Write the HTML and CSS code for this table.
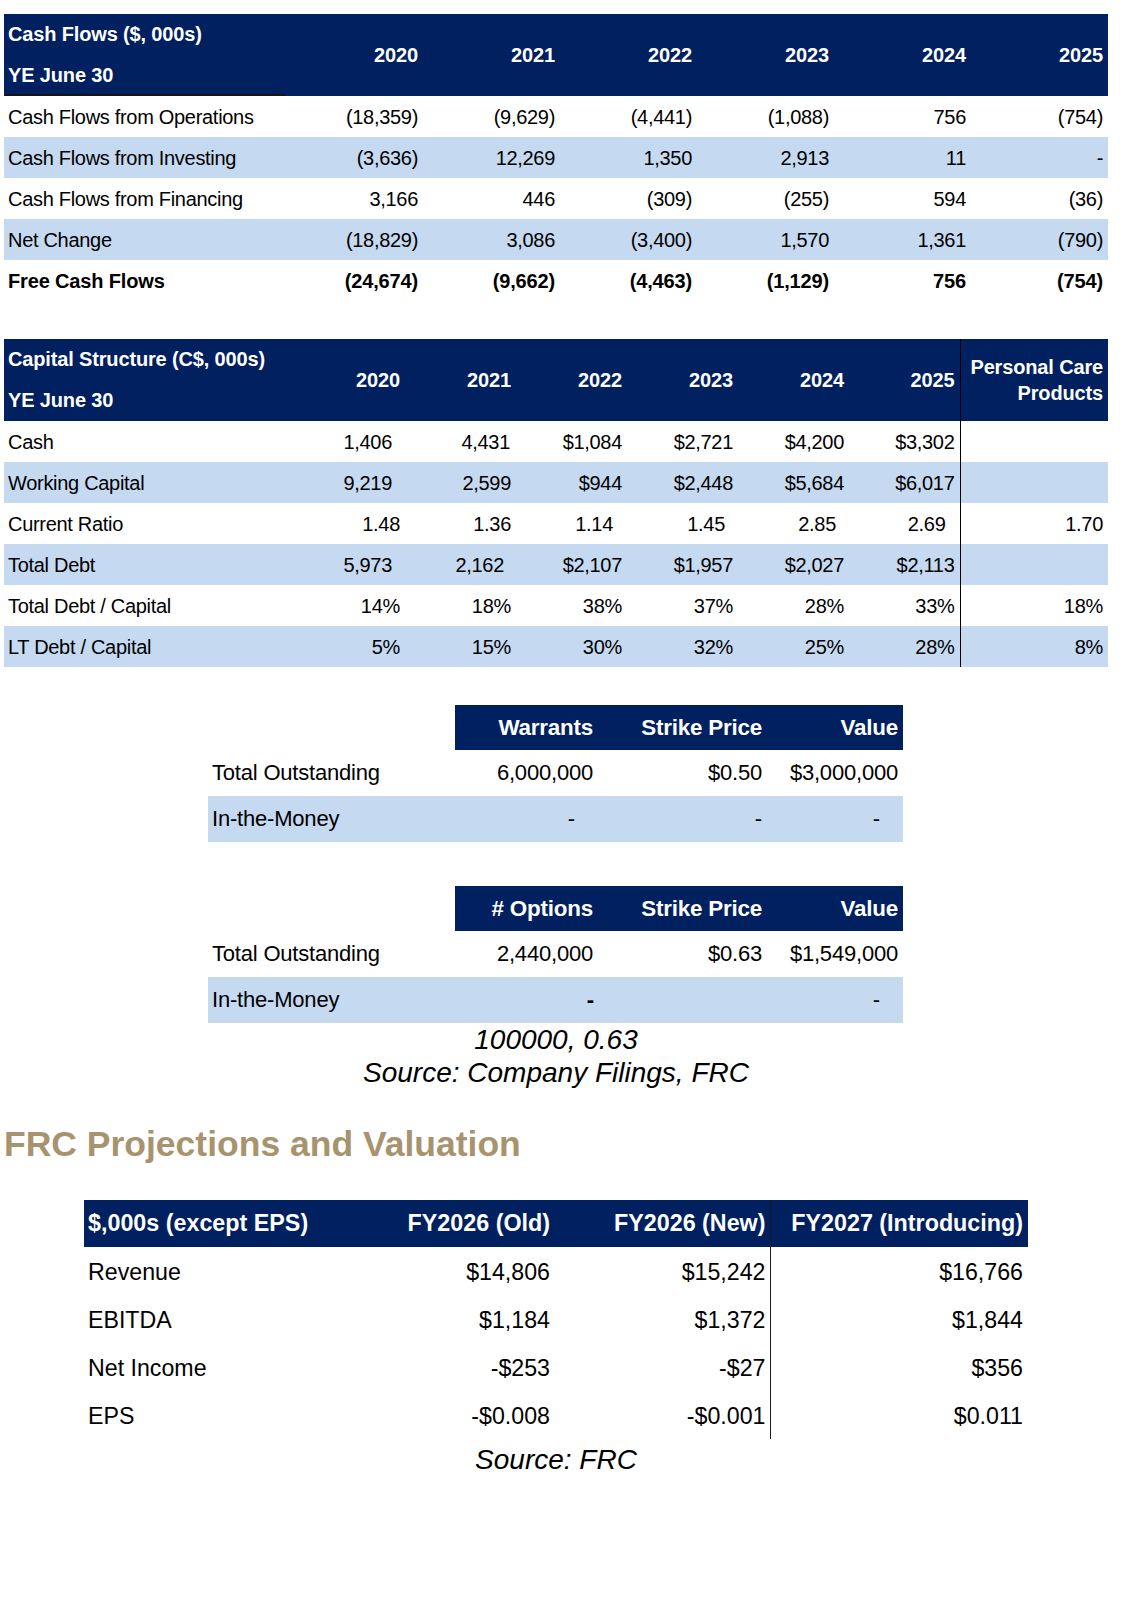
FILE: index.html
```html
<!DOCTYPE html>
<html lang="en">
<head>
<meta charset="utf-8">
<title>Financials</title>
<link rel="stylesheet" href="styles.css">
</head>
<body>
<main class="page">

<table class="fin cf">
  <colgroup><col class="cf-label"><col class="cf-yr"><col class="cf-yr"><col class="cf-yr"><col class="cf-yr"><col class="cf-yr"><col class="cf-yr"></colgroup>
  <thead>
    <tr>
      <th class="lbl underline"><div class="hl">Cash Flows ($, 000s)</div><div class="hl">YE June 30</div></th>
      <th>2020</th><th>2021</th><th>2022</th><th>2023</th><th>2024</th><th>2025</th>
    </tr>
  </thead>
  <tbody>
    <tr><td class="lbl">Cash Flows from Operations</td><td>(18,359)</td><td>(9,629)</td><td>(4,441)</td><td>(1,088)</td><td>756</td><td>(754)</td></tr>
    <tr class="band"><td class="lbl">Cash Flows from Investing</td><td>(3,636)</td><td>12,269</td><td>1,350</td><td>2,913</td><td>11</td><td>-</td></tr>
    <tr><td class="lbl">Cash Flows from Financing</td><td>3,166</td><td>446</td><td>(309)</td><td>(255)</td><td>594</td><td>(36)</td></tr>
    <tr class="band"><td class="lbl">Net Change</td><td>(18,829)</td><td>3,086</td><td>(3,400)</td><td>1,570</td><td>1,361</td><td>(790)</td></tr>
    <tr class="strong"><td class="lbl">Free Cash Flows</td><td>(24,674)</td><td>(9,662)</td><td>(4,463)</td><td>(1,129)</td><td>756</td><td>(754)</td></tr>
  </tbody>
</table>

<table class="fin cs">
  <colgroup><col class="cs-label"><col class="cs-yr"><col class="cs-yr"><col class="cs-yr"><col class="cs-yr"><col class="cs-yr"><col class="cs-yr"><col class="cs-pc"></colgroup>
  <thead>
    <tr>
      <th class="lbl"><div class="hl">Capital Structure (C$, 000s)</div><div class="hl">YE June 30</div></th>
      <th>2020</th><th>2021</th><th>2022</th><th>2023</th><th>2024</th><th>2025</th>
      <th class="pc"><div class="pcl">Personal Care</div><div class="pcl">Products</div></th>
    </tr>
  </thead>
  <tbody>
    <tr><td class="lbl">Cash</td><td class="p13">1,406</td><td class="p6">4,431</td><td>$1,084</td><td>$2,721</td><td>$4,200</td><td>$3,302</td><td class="pc"></td></tr>
    <tr class="band"><td class="lbl">Working Capital</td><td class="p13">9,219</td><td>2,599</td><td>$944</td><td>$2,448</td><td>$5,684</td><td>$6,017</td><td class="pc"></td></tr>
    <tr><td class="lbl">Current Ratio</td><td>1.48</td><td>1.36</td><td class="p14">1.14</td><td class="p13">1.45</td><td class="p13">2.85</td><td class="p14">2.69</td><td class="pc">1.70</td></tr>
    <tr class="band"><td class="lbl">Total Debt</td><td class="p13">5,973</td><td class="p12">2,162</td><td>$2,107</td><td>$1,957</td><td>$2,027</td><td>$2,113</td><td class="pc"></td></tr>
    <tr><td class="lbl">Total Debt / Capital</td><td>14%</td><td>18%</td><td>38%</td><td>37%</td><td>28%</td><td>33%</td><td class="pc">18%</td></tr>
    <tr class="band"><td class="lbl">LT Debt / Capital</td><td>5%</td><td>15%</td><td>30%</td><td>32%</td><td>25%</td><td>28%</td><td class="pc">8%</td></tr>
  </tbody>
</table>

<table class="opt warrants">
  <colgroup><col class="o-label"><col class="o-qty"><col class="o-strike"><col class="o-val"></colgroup>
  <thead>
    <tr><th class="blank"></th><th>Warrants</th><th>Strike Price</th><th>Value</th></tr>
  </thead>
  <tbody>
    <tr><td class="lbl">Total Outstanding</td><td>6,000,000</td><td>$0.50</td><td>$3,000,000</td></tr>
    <tr class="band"><td class="lbl">In-the-Money</td><td class="dash-in">-</td><td>-</td><td class="dash-in">-</td></tr>
  </tbody>
</table>

<table class="opt options">
  <colgroup><col class="o-label"><col class="o-qty"><col class="o-strike"><col class="o-val"></colgroup>
  <thead>
    <tr><th class="blank"></th><th># Options</th><th>Strike Price</th><th>Value</th></tr>
  </thead>
  <tbody>
    <tr><td class="lbl">Total Outstanding</td><td>2,440,000</td><td>$0.63</td><td>$1,549,000</td></tr>
    <tr class="band"><td class="lbl">In-the-Money</td><td class="dash-bold">-</td><td></td><td class="dash-in">-</td></tr>
  </tbody>
</table>

<div class="note">
  <p>100000, 0.63</p>
  <p>Source: Company Filings, FRC</p>
</div>

<h2 class="section-title">FRC Projections and Valuation</h2>

<table class="proj">
  <colgroup><col class="p-label"><col class="p-old"><col class="p-new"><col class="p-intro"></colgroup>
  <thead>
    <tr><th class="lbl">$,000s (except EPS)</th><th>FY2026 (Old)</th><th>FY2026 (New)</th><th class="div">FY2027 (Introducing)</th></tr>
  </thead>
  <tbody>
    <tr><td class="lbl">Revenue</td><td>$14,806</td><td>$15,242</td><td class="div">$16,766</td></tr>
    <tr><td class="lbl">EBITDA</td><td>$1,184</td><td>$1,372</td><td class="div">$1,844</td></tr>
    <tr><td class="lbl">Net Income</td><td>-$253</td><td>-$27</td><td class="div">$356</td></tr>
    <tr><td class="lbl">EPS</td><td>-$0.008</td><td>-$0.001</td><td class="div">$0.011</td></tr>
  </tbody>
</table>

<div class="note note-small">
  <p>Source: FRC</p>
</div>

</main>
</body>
</html>
```

FILE: styles.css
```css
* { box-sizing: border-box; }

html, body {
  margin: 0;
  padding: 0;
  background: #ffffff;
}

body {
  font-family: "Liberation Sans", Arial, sans-serif;
  color: #000000;
}

.page {
  width: 1126px;
  min-height: 1614px;
  padding: 14px 18px 0 4px;
}

table {
  border-collapse: collapse;
  table-layout: fixed;
  border-spacing: 0;
}

th, td {
  padding: 0;
  white-space: nowrap;
}

/* ---------- Financial tables ---------- */
.fin {
  width: 1104px;
  font-size: 20px;
  letter-spacing: -0.3px;
}

.fin th {
  background: #002060;
  color: #ffffff;
  font-weight: bold;
  letter-spacing: -0.15px;
  text-align: right;
  vertical-align: middle;
  height: 82px;
  padding: 0 5px;
}

.fin th.lbl {
  text-align: left;
  padding: 0 4px;
}

.fin th.underline {
  box-shadow: inset 0 -2px 0 #151515;
}

.fin .hl {
  height: 41px;
  line-height: 41px;
}

.fin td {
  height: 41px;
  padding: 1px 5px 0;
  text-align: right;
  vertical-align: middle;
}

.fin td.lbl {
  text-align: left;
  padding-left: 4px;
}

.band td {
  background: #c5d9f1;
}

.strong td {
  font-weight: bold;
  letter-spacing: -0.15px;
}

.cf-label { width: 282px; }
.cf-yr { width: 137px; }

.cs {
  margin-top: 38px;
}

.cs-label { width: 290px; }
.cs-yr { width: 111px; }
.cs-pc { width: 148px; }

.cs .pc {
  border-left: 1px solid #000000;
}

.cs th.pc {
  line-height: 26px;
}

.p6 { padding-right: 6px !important; }
.p12 { padding-right: 12px !important; }
.p13 { padding-right: 13px !important; }
.p14 { padding-right: 14px !important; }

/* ---------- Warrants / options ---------- */
.opt {
  width: 695px;
  margin-left: 204px;
  font-size: 22px;
  letter-spacing: -0.2px;
}

.warrants { margin-top: 38px; }
.options { margin-top: 44px; }

.o-label { width: 247px; }
.o-qty { width: 143px; }
.o-strike { width: 169px; }
.o-val { width: 136px; }

.opt th {
  background: #002060;
  color: #ffffff;
  font-weight: bold;
  font-size: 22.4px;
  height: 45px;
  text-align: right;
  padding: 0 5px;
  vertical-align: middle;
}

.opt th.blank {
  background: #ffffff;
}

.opt td {
  height: 46px;
  text-align: right;
  padding: 0 5px;
  vertical-align: middle;
}

.opt td.lbl {
  text-align: left;
  padding-left: 4px;
}

.opt td.dash-in {
  padding-right: 23px;
}

.opt td.dash-bold {
  font-weight: bold;
  padding-right: 4px;
}

/* ---------- Notes ---------- */
.note {
  width: 1104px;
  text-align: center;
  font-style: italic;
  font-size: 28px;
  line-height: 33px;
}

.note p {
  margin: 0;
}

.note-small {
  margin-top: 4px;
}

.section-title {
  margin: 35px 0 36px;
  font-size: 35.5px;
  line-height: 40px;
  font-weight: bold;
  color: #a8936f;
}

/* ---------- Projections ---------- */
.proj {
  width: 944px;
  margin-left: 80px;
  font-size: 23.2px;
}

.p-label { width: 296px; }
.p-old { width: 174px; }
.p-new { width: 216px; }
.p-intro { width: 258px; }

.proj th {
  background: #002060;
  color: #ffffff;
  font-weight: bold;
  font-size: 23.3px;
  height: 47px;
  text-align: right;
  padding: 0 4px;
  vertical-align: middle;
}

.proj td {
  height: 48px;
  text-align: right;
  padding: 2px 4px 0;
  vertical-align: middle;
}

.proj .lbl {
  text-align: left;
  padding-left: 4px;
}

.proj .div {
  border-left: 1px solid #1a1a1a;
  padding-right: 5px;
}
```
